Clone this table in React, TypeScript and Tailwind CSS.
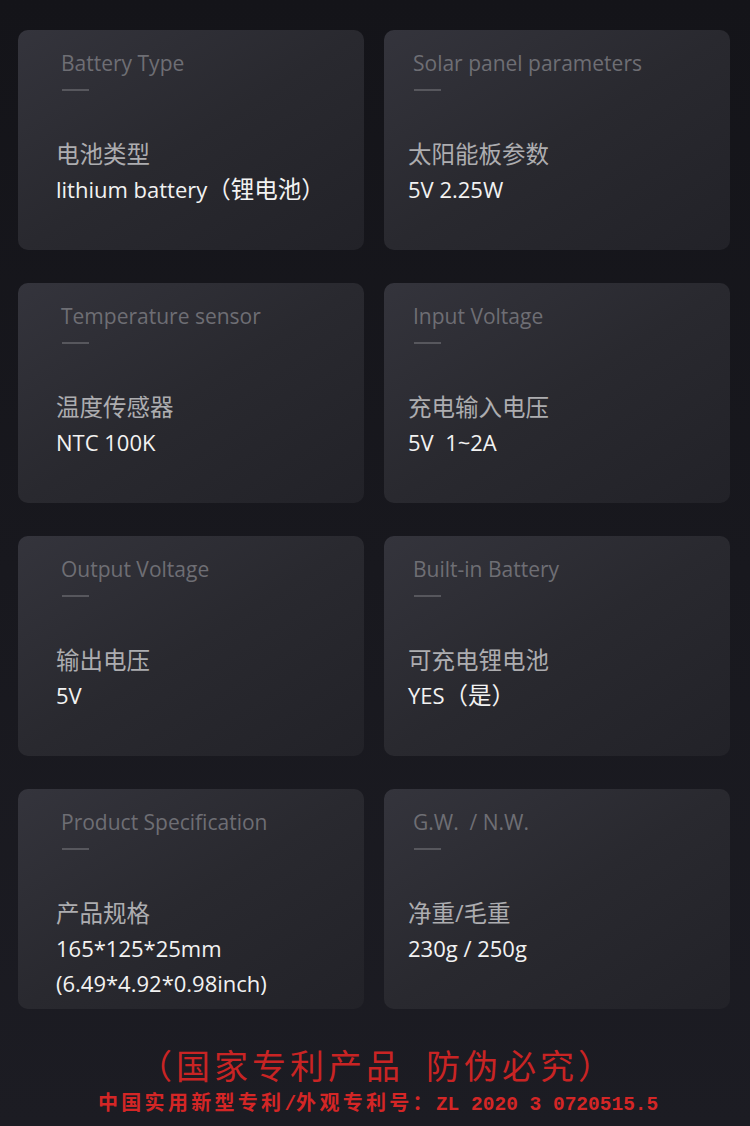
import React from "react";

type Seg = string | { cjk: string };
type Spec = { title: string; label: string; values: Seg[][] };

const specs: Spec[] = [
  { title: "Battery Type", label: "电池类型", values: [["lithium battery", { cjk: "（锂电池）" }]] },
  { title: "Solar panel parameters", label: "太阳能板参数", values: [["5V 2.25W"]] },
  { title: "Temperature sensor", label: "温度传感器", values: [["NTC 100K"]] },
  { title: "Input Voltage", label: "充电输入电压", values: [["5V\u00a0 1~2A"]] },
  { title: "Output Voltage", label: "输出电压", values: [["5V"]] },
  { title: "Built-in Battery", label: "可充电锂电池", values: [["YES", { cjk: "（是）" }]] },
  { title: "Product Specification", label: "产品规格", values: [["165*125*25mm"], ["(6.49*4.92*0.98inch)"]] },
  { title: "G.W.  / N.W.", label: "净重/毛重", values: [["230g / 250g"]] },
];

const font = { fontFamily: '"Open Sans", "Noto Sans CJK SC", sans-serif' };

function Card({ spec, left }: { spec: Spec; left: boolean }) {
  return (
    <div
      className={`h-[220px] rounded-[10px] bg-gradient-to-br from-[#34343c] via-[#29292f] to-[#222228] pt-[18px] ${
        left ? "pl-[38px]" : "pl-[24px]"
      }`}
    >
      <div className="ml-[5px] text-[21px] leading-[30px] text-[#6e6e74] whitespace-pre">{spec.title}</div>
      <div className="ml-[6px] mt-[11px] h-[2px] w-[27px] bg-[#57575d]" />
      <div className="mt-[45px] text-[23.5px] leading-[36px] text-[#adadb0]">{spec.label}</div>
      {spec.values.map((line, i) => (
        <div key={i} className="text-[22px] leading-[35px] text-[#f2f2f2] whitespace-pre">
          {line.map((seg, j) =>
            typeof seg === "string" ? (
              <span key={j}>{seg}</span>
            ) : (
              <span key={j} className="text-[23.5px]">
                {seg.cjk}
              </span>
            )
          )}
        </div>
      ))}
    </div>
  );
}

export default function App() {
  const cjk = "text-[20px] tracking-[3.3px]";
  const mono = { fontFamily: '"Liberation Mono", "Noto Sans CJK SC", monospace' };
  const cjkFont = { fontFamily: '"Noto Sans CJK SC", serif' };
  return (
    <div
      className="w-[750px] h-[1126px] overflow-hidden bg-gradient-to-b from-[#141419] to-[#1c1c23] pt-[30px] pl-[18px] pr-[20px]"
      style={font}
    >
      <div className="grid grid-cols-2 gap-x-[20px] gap-y-[33px]">
        {specs.map((s, i) => (
          <Card key={i} spec={s} left={i % 2 === 0} />
        ))}
      </div>
      <div
        className="mt-[37px] -ml-[18px] -mr-[20px] pl-[4px] text-center text-[34px] leading-[38px] tracking-[4px] text-[#c92424] whitespace-nowrap"
        style={cjkFont}
      >
        （国家专利产品<span className="inline-block w-[22px]" />防伪必究）
      </div>
      <div className="mt-[6px] pl-[80px] leading-[24px] text-[#d42626] whitespace-pre font-bold" style={mono}>
        <span className={cjk} style={cjkFont}>中国实用新型专利</span>
        <span className="text-[19.5px]">/</span>
        <span className={cjk} style={cjkFont}>外观专利号：</span>
        <span className="text-[19.5px]">ZL 2020 3 0720515.5</span>
      </div>
    </div>
  );
}
